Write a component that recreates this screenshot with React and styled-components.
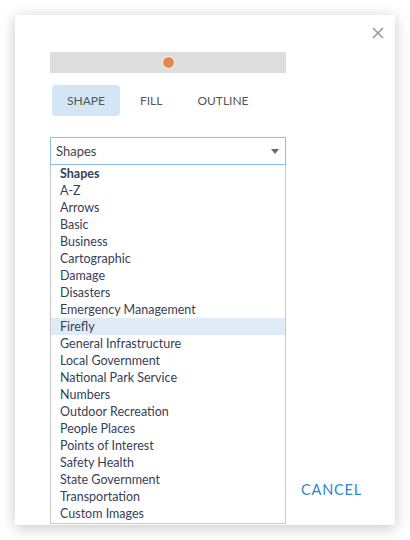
import styled, { createGlobalStyle } from "styled-components"

const Global = createGlobalStyle`
  body {
    margin: 0;
    background: #ffffff;
    font-family: Lato, "Open Sans", sans-serif;
  }
`

const Page = styled.div`
  width: 410px;
  height: 540px;
  padding: 15px;
  box-sizing: border-box;
`

const Card = styled.div`
  position: relative;
  width: 380px;
  height: 510px;
  box-sizing: border-box;
  background: #fff;
  box-shadow: 0 3px 14px rgba(0, 0, 0, 0.22);
  padding: 37px 35px 27px 35px;
  display: flex;
  flex-direction: column;
`

const Close = styled.button`
  position: absolute;
  top: 12px;
  right: 11px;
  width: 12px;
  height: 12px;
  padding: 0;
  border: none;
  background: none;
  display: flex;
`

const Slider = styled.div`
  width: 236px;
  height: 21px;
  background: #dddddd;
  display: flex;
  align-items: center;
  justify-content: center;
`

const Dot = styled.span`
  width: 11px;
  height: 11px;
  border-radius: 50%;
  background: #e6894d;
  border: 1px solid #fff;
`

const Tabs = styled.div`
  display: flex;
  gap: 5px;
  margin: 12px 0 0 2px;
`

const Tab = styled.button`
  height: 31px;
  padding: 0 15px;
  border: none;
  border-radius: 4px;
  background: ${p => (p.$active ? "#d2e6f6" : "transparent")};
  color: #555;
  font-family: Lato, sans-serif;
  font-size: 12px;
`

const SelectWrap = styled.div`
  position: relative;
  width: 236px;
  margin-top: 21px;
`

const SelectBox = styled.div`
  height: 28px;
  box-sizing: border-box;
  border: 1px solid #8dbfe2;
  display: flex;
  align-items: center;
  justify-content: space-between;
  padding: 0 6px 0 5px;
  color: #444;
  font-size: 13px;
`

const Caret = styled.span`
  width: 0;
  height: 0;
  border-left: 4px solid transparent;
  border-right: 4px solid transparent;
  border-top: 5px solid #6b6b6b;
`

const Menu = styled.ul`
  position: absolute;
  left: 0;
  top: 28px;
  width: 236px;
  box-sizing: border-box;
  margin: 0;
  padding: 0 0 1px;
  list-style: none;
  background: #fff;
  border: 1px solid #c8c8c8;
  border-top: none;
`

const Item = styled.li`
  height: 17px;
  line-height: 17px;
  padding-left: 9px;
  font-size: 12.5px;
  color: #384058;
  font-weight: ${p => (p.$header ? 700 : 400)};
  background: ${p => (p.$hover ? "#dfecf8" : "transparent")};
  white-space: nowrap;
`

const Footer = styled.div`
  margin-top: auto;
  display: flex;
  justify-content: flex-end;
`

const Cancel = styled.button`
  border: none;
  background: none;
  padding: 0;
  margin-right: -2px;
  color: #2f87c9;
  font-family: Lato, sans-serif;
  font-size: 14.5px;
  letter-spacing: 0.8px;
`

const items = [
  "A-Z",
  "Arrows",
  "Basic",
  "Business",
  "Cartographic",
  "Damage",
  "Disasters",
  "Emergency Management",
  "Firefly",
  "General Infrastructure",
  "Local Government",
  "National Park Service",
  "Numbers",
  "Outdoor Recreation",
  "People Places",
  "Points of Interest",
  "Safety Health",
  "State Government",
  "Transportation",
  "Custom Images",
]

const App = () => {
  return (
    <Page>
      <Global />
      <Card>
        <Close aria-label="close">
          <svg width="12" height="12" viewBox="0 0 12 12">
            <path d="M1 1L11 11M11 1L1 11" stroke="#9a9a9a" strokeWidth="1.6" />
          </svg>
        </Close>
        <Slider>
          <Dot />
        </Slider>
        <Tabs>
          <Tab $active>SHAPE</Tab>
          <Tab>FILL</Tab>
          <Tab>OUTLINE</Tab>
        </Tabs>
        <SelectWrap>
          <SelectBox>
            Shapes
            <Caret />
          </SelectBox>
          <Menu>
            <Item $header>Shapes</Item>
            {items.map(name => (
              <Item key={name} $hover={name === "Firefly"}>
                {name}
              </Item>
            ))}
          </Menu>
        </SelectWrap>
        <Footer>
          <Cancel>CANCEL</Cancel>
        </Footer>
      </Card>
    </Page>
  )
}

export default App
